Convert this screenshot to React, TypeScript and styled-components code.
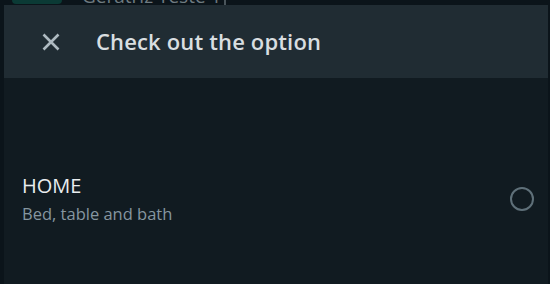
import React from "react";
import styled, { createGlobalStyle } from "styled-components";

const Global = createGlobalStyle`
  html, body { margin: 0; padding: 0; background: #0b141a; height: 100%; overflow: hidden; }
  body { font-family: "Open Sans", "Noto Sans", sans-serif; }
  #root { height: 100%; }
`;

const Page = styled.div`
  position: relative;
  width: 550px;
  height: 284px;
  background: #0b141a;
  overflow: hidden;
`;

const BackBar = styled.div`
  display: flex;
  align-items: flex-start;
  gap: 20px;
  height: 24px;
  margin-top: -16px;
  padding-left: 12px;
`;

const Badge = styled.div`
  width: 50px;
  height: 20px;
  background: #0b3a35;
  border-radius: 4px;
`;

const BackTitle = styled.div`
  color: #6f7b81;
  font-size: 19px;
  line-height: 24px;
  border-right: 2px solid #4a555b;
  padding-right: 3px;
`;

const Modal = styled.div`
  position: absolute;
  top: 5px;
  left: 4px;
  right: 2px;
  bottom: 0;
  display: flex;
  flex-direction: column;
  background: #111b21;
`;

const Header = styled.header`
  display: flex;
  align-items: center;
  height: 73px;
  padding-left: 36px;
  gap: 34px;
  background: #202c33;
  flex-shrink: 0;
`;

const CloseButton = styled.button`
  display: flex;
  align-items: center;
  justify-content: center;
  width: 22px;
  height: 22px;
  padding: 0;
  border: none;
  background: transparent;
  color: #aebac1;
  cursor: pointer;
`;

const Title = styled.h1`
  margin: 0;
  font-size: 22px;
  font-weight: 600;
  color: #d9dee0;
  letter-spacing: 0.15px;
  margin-top: -2px;
`;

const Body = styled.div`
  display: flex;
  flex-direction: column;
  padding-top: 94px;
`;

const Option = styled.label`
  display: flex;
  align-items: center;
  justify-content: space-between;
  padding: 0 14px 0 18px;
  cursor: pointer;
`;

const OptionText = styled.div`
  display: flex;
  flex-direction: column;
  gap: 4px;
`;

const OptionTitle = styled.div`
  font-size: 20px;
  line-height: 27px;
  color: #e9edef;
`;

const OptionSub = styled.div`
  font-size: 16.5px;
  line-height: 22px;
  color: #8696a0;
`;

const Radio = styled.span`
  width: 24px;
  height: 24px;
  border-radius: 50%;
  border: 2px solid #5f7079;
  box-sizing: border-box;
  margin-top: 0px;
`;

export default function App() {
  return (
    <Page>
      <Global />
      <BackBar>
        <Badge />
        <BackTitle>Geratriz Teste 1</BackTitle>
      </BackBar>
      <Modal>
        <Header>
          <CloseButton aria-label="Close">
            <svg width="20" height="20" viewBox="0 0 20 20">
              <path d="M2.5 2.5 L17.5 17.5 M17.5 2.5 L2.5 17.5" stroke="currentColor" strokeWidth="2.6" strokeLinecap="butt" />
            </svg>
          </CloseButton>
          <Title>Check out the option</Title>
        </Header>
        <Body>
          <Option>
            <OptionText>
              <OptionTitle>HOME</OptionTitle>
              <OptionSub>Bed, table and bath</OptionSub>
            </OptionText>
            <Radio />
          </Option>
        </Body>
      </Modal>
    </Page>
  );
}
